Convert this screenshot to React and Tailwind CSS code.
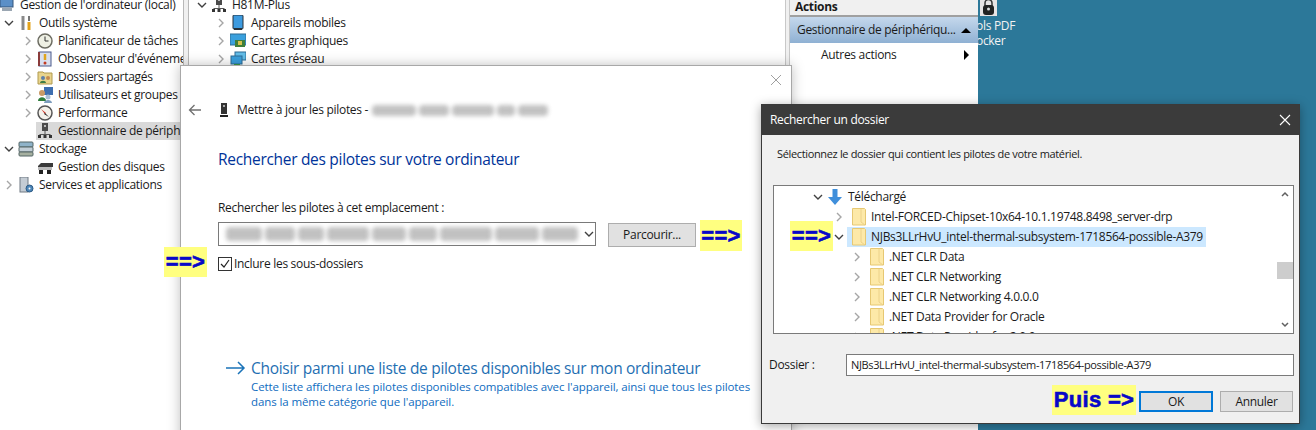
const UI = '[font-family:"Open_Sans","Noto_Sans",sans-serif]';

const Chevron = ({ open, className = '' }) => (
  <svg width="10" height="10" viewBox="0 0 10 10" fill="none" className={`shrink-0 ${className}`}>
    <path d={open ? 'M1 3l4 4 4-4' : 'M3 1l4 4-4 4'} stroke={open ? '#404040' : '#a6a6a6'} strokeWidth="1.4" />
  </svg>
);

const Folder = () => (
  <svg width="14" height="18" viewBox="0 0 14 18" className="shrink-0">
    <path d="M0.5 0.5h12l1 1v15.500h-13z" fill="#fde9a8" stroke="#e6c873" />
    <path d="M9 1v13l4 3" fill="none" stroke="#ecd28a" />
  </svg>
);

const icons = {
  computer: (
    <>
      <rect x="1" y="1" width="13" height="9" fill="#5b8fc7" stroke="#35557a" />
      <rect x="3" y="11" width="10" height="3" fill="#9aa6b2" />
    </>
  ),
  tools: (
    <>
      <path d="M5 1v14" stroke="#8a8a8a" strokeWidth="3" />
      <path d="M11 1v5" stroke="#777" strokeWidth="2" />
      <path d="M11 7v8" stroke="#e3a21a" strokeWidth="3" />
    </>
  ),
  clock: (
    <>
      <circle cx="8" cy="8" r="7" fill="#eef0e4" stroke="#6d6d63" strokeWidth="1.500" />
      <path d="M8 3.500V8h3.500" stroke="#333" fill="none" />
    </>
  ),
  log: (
    <>
      <rect x="2" y="1" width="12" height="14" fill="#d9dfee" stroke="#4b5a8c" />
      <path d="M2 1v14" stroke="#8a3b3b" strokeWidth="2" />
      <path d="M8 3v6" stroke="#e0a51e" strokeWidth="2.500" />
      <circle cx="8" cy="12" r="1.500" fill="#c23b22" />
    </>
  ),
  share: (
    <>
      <path d="M1 3h5l1 1h8v11H1z" fill="#e8d48d" stroke="#b09a4e" />
      <circle cx="6" cy="9" r="2" fill="#5d7fa8" />
      <path d="M3 14c0-3 6-3 6 0z" fill="#3f7d45" />
      <circle cx="11" cy="9" r="2" fill="#c48a4e" />
    </>
  ),
  users: (
    <>
      <rect x="7" y="0" width="9" height="8" fill="#3e6fb0" />
      <circle cx="5" cy="6" r="3" fill="#c99a66" />
      <path d="M1 14c0-5 8-5 8 0z" fill="#2f7d3c" />
      <circle cx="11" cy="10" r="2.500" fill="#a9bfd6" />
      <path d="M7 16c0-4 8-4 8 0z" fill="#7e9dbd" />
    </>
  ),
  perf: (
    <>
      <circle cx="8" cy="8" r="7" fill="#f4f1ea" stroke="#555" strokeWidth="1.500" />
      <path d="M4 4l5 4-1 1z" fill="#c92a1d" />
      <path d="M12 12L8 8l-1 1z" fill="#222" />
    </>
  ),
  device: (
    <>
      <rect x="5" y="0" width="6" height="8" fill="#4b4b4b" />
      <rect x="7" y="2" width="2" height="2" fill="#bbb" />
      <path d="M8 8v3M2.500 11.500h11" stroke="#555" />
      <rect x="1" y="12" width="3" height="3" fill="#333" />
      <rect x="6.500" y="12" width="3" height="3" fill="#333" />
      <rect x="12" y="12" width="3" height="3" fill="#333" />
    </>
  ),
  storage: (
    <>
      <rect x="1" y="1" width="14" height="5" rx="1" fill="#8fb3c9" stroke="#566" />
      <rect x="1" y="6" width="14" height="5" rx="1" fill="#c2ced6" stroke="#566" />
      <rect x="1" y="11" width="14" height="4" rx="1" fill="#a6b0a0" stroke="#566" />
    </>
  ),
  disk: (
    <>
      <path d="M1 7l3-3h12v4H1z" fill="#3a3a3a" />
      <rect x="1" y="8" width="14" height="3" fill="#bbb" />
      <rect x="2" y="11" width="4" height="4" fill="#222" />
      <rect x="10" y="11" width="4" height="4" fill="#222" />
    </>
  ),
  services: (
    <>
      <rect x="2" y="0" width="8" height="15" fill="#c4ccd4" stroke="#707a84" />
      <circle cx="11.500" cy="11.500" r="3.500" fill="#4d86b8" stroke="#2c5a85" />
      <circle cx="11.500" cy="11.500" r="1" fill="#fff" />
    </>
  ),
  mobile: (
    <>
      <rect x="3" y="0" width="10" height="14" rx="1" fill="#3d9be0" stroke="#27313a" />
      <rect x="4" y="13" width="8" height="2" fill="#27313a" />
    </>
  ),
  gpu: (
    <>
      <rect x="0" y="1" width="16" height="11" fill="#3aa0dd" stroke="#2c6c96" />
      <rect x="5" y="7" width="10" height="7" fill="#3f7f3a" />
      <rect x="8" y="8" width="4" height="4" fill="#d5c24e" />
    </>
  ),
  net: (
    <>
      <rect x="5" y="1" width="11" height="8" fill="#63bde8" stroke="#2c6c96" />
      <rect x="1" y="5" width="11" height="8" fill="#3aa0dd" stroke="#2c6c96" />
      <path d="M4 14h6" stroke="#3f9a4a" strokeWidth="2" />
    </>
  ),
};

const Icon = ({ name }) => (
  <svg width="16" height="16" viewBox="0 0 16 16" className="shrink-0">
    {icons[name]}
  </svg>
);

const leftRows = [
  { label: "Gestion de l'ordinateur (local)", icon: 'computer', pad: '-ml-[2px]', arrow: 'none' },
  { label: 'Outils système', icon: 'tools', pad: 'pl-[4px]', arrow: 'open' },
  { label: 'Planificateur de tâches', icon: 'clock', pad: 'pl-[23px]', arrow: 'closed' },
  { label: "Observateur d'événements", icon: 'log', pad: 'pl-[23px]', arrow: 'closed' },
  { label: 'Dossiers partagés', icon: 'share', pad: 'pl-[23px]', arrow: 'closed' },
  { label: 'Utilisateurs et groupes locaux', icon: 'users', pad: 'pl-[23px]', arrow: 'closed' },
  { label: 'Performance', icon: 'perf', pad: 'pl-[23px]', arrow: 'closed' },
  { label: 'Gestionnaire de périphériques', icon: 'device', pad: 'pl-[23px]', arrow: 'blank', active: true },
  { label: 'Stockage', icon: 'storage', pad: 'pl-[4px]', arrow: 'open' },
  { label: 'Gestion des disques', icon: 'disk', pad: 'pl-[23px]', arrow: 'blank' },
  { label: 'Services et applications', icon: 'services', pad: 'pl-[4px]', arrow: 'closed' },
];

const centerRows = [
  { label: 'H81M-Plus', icon: 'device', pad: 'pl-[8px]', arrow: 'open' },
  { label: 'Appareils mobiles', icon: 'mobile', pad: 'pl-[27px]', arrow: 'closed' },
  { label: 'Cartes graphiques', icon: 'gpu', pad: 'pl-[27px]', arrow: 'closed' },
  { label: 'Cartes réseau', icon: 'net', pad: 'pl-[27px]', arrow: 'closed' },
];

function TreeRow({ row }) {
  return (
    <div className={`flex h-[18px] items-center whitespace-nowrap ${row.pad}`}>
      {row.arrow !== 'none' && (
        <span className="flex w-[13px] shrink-0 justify-start">
          {row.arrow === 'open' && <Chevron open />}
          {row.arrow === 'closed' && <Chevron />}
        </span>
      )}
      <span className={`flex h-[18px] items-center gap-[5px] pl-[1px] pr-[6px] ${row.active ? 'bg-[#d9d9d9]' : ''}`}>
        <Icon name={row.icon} />
        <span>{row.label}</span>
      </span>
    </div>
  );
}

const folderRows = [
  { label: 'Intel-FORCED-Chipset-10x64-10.1.19748.8498_server-drp', pad: 'pl-[60px]' },
  { label: 'NJBs3LLrHvU_intel-thermal-subsystem-1718564-possible-A379', pad: 'pl-[60px]', selected: true, open: true },
  { label: '.NET CLR Data', pad: 'pl-[78px]' },
  { label: '.NET CLR Networking', pad: 'pl-[78px]' },
  { label: '.NET CLR Networking 4.0.0.0', pad: 'pl-[78px]' },
  { label: '.NET Data Provider for Oracle', pad: 'pl-[78px]' },
  { label: '.NET Data Provider for 2.0.0', pad: 'pl-[78px]' },
];

function FolderRow({ row }) {
  return (
    <div className={`flex h-[20px] shrink-0 items-center whitespace-nowrap ${row.pad}`}>
      <span className="w-[13px] shrink-0">
        <Chevron open={row.open} />
      </span>
      <span className={`flex h-[20px] items-center gap-[5px] pl-[5px] pr-[3px] ${row.selected ? 'bg-[#cce8ff]' : ''}`}>
        <Folder />
        <span>{row.label}</span>
      </span>
    </div>
  );
}

const Mark = ({ className, children }) => (
  <div className={`absolute flex items-center justify-center whitespace-nowrap bg-[#ffff80] font-['Liberation_Sans',sans-serif] text-[22px] font-bold leading-none tracking-[0.3px] text-[#0808c8] [-webkit-text-stroke:0.6px_#0808c8] ${className}`}>
    {children}
  </div>
);

// redacted text: word-sized smudges, blurred together
const Smudge = ({ words, className }) => (
  <div className={`flex items-center gap-[3px] blur-[2px] ${className}`}>
    {words.map((w, i) => (
      <span key={i} className="h-full rounded-sm bg-[#a8a8a8]" style={{ width: w }} />
    ))}
  </div>
);

export default function App() {
  return (
    <div className={`relative h-[430px] w-[1316px] overflow-hidden bg-[#2c7899] text-[12px] tracking-[-0.3px] text-[#1a1a1a] ${UI}`}>
      {/* desktop shortcut behind the console */}
      <div className="absolute left-[976px] top-[18px] leading-[15px] text-[#f2f2f2]">
        <div>ols PDF</div>
        <div>ocker</div>
      </div>
      <svg width="17" height="16" viewBox="0 0 17 16" className="absolute left-[980px] top-0">
        <rect x="0" y="0" width="17" height="16" fill="#e8e4e4" />
        <path d="M5 6V3a3.500 3.500 0 017 0v3" fill="none" stroke="#333" strokeWidth="1.500" />
        <rect x="3" y="5" width="11" height="10" rx="3" fill="#222" />
        <circle cx="8.500" cy="9" r="1.500" fill="#ddd" />
      </svg>

      {/* console window */}
      <div className="absolute left-0 top-0 flex h-[430px] w-[978px] bg-white">
        <div className="-mt-[4px] w-[183px] shrink-0 overflow-hidden">
          {leftRows.map((row) => (
            <TreeRow key={row.label} row={row} />
          ))}
        </div>
        <div className="w-[6px] shrink-0 border-x border-[#b8b8b8] bg-[#f0f0f0]" />
        <div className="-mt-[4px] w-[596px] shrink-0 overflow-hidden">
          {centerRows.map((row) => (
            <TreeRow key={row.label} row={row} />
          ))}
        </div>
        <div className="w-[5px] shrink-0 border-x border-[#c8c8c8] bg-[#f0f0f0]" />
        <div className="flex-1 whitespace-nowrap">
          <div className="h-[17px] border-b-2 border-[#a0a0a0] bg-[#f0f0f0] pl-[5px] text-[12px] font-bold leading-[13px]">Actions</div>
          <div className="flex h-[26px] items-center justify-between bg-gradient-to-b from-[#c5d8ec] to-[#8fb1d3] pl-[7px] pr-[7px]">
            <span>Gestionnaire de périphériqu...</span>
            <span className="h-0 w-0 border-x-[5px] border-b-[5px] border-x-transparent border-b-black" />
          </div>
          <div className="flex h-[24px] items-center justify-between pl-[31px] pr-[9px]">
            <span>Autres actions</span>
            <span className="h-0 w-0 border-y-[5px] border-l-[5px] border-y-transparent border-l-black" />
          </div>
        </div>
      </div>

      {/* update drivers wizard */}
      <div className="absolute left-[180px] top-[65px] h-[380px] w-[612px] border border-[#a8a8a8] bg-white pl-[37px] pt-[35px] shadow-[0_0_12px_rgba(0,0,0,0.25)]">
        <svg width="12" height="12" viewBox="0 0 12 12" className="absolute right-[9px] top-[8px]">
          <path d="M1 1l10 10M11 1L1 11" stroke="#a0a0a0" />
        </svg>
        <div className="-ml-[30px] flex h-[18px] items-center">
          <svg width="14" height="12" viewBox="0 0 14 12" className="shrink-0">
            <path d="M13 6H1.500M6.500 1L1.500 6l5 5" fill="none" stroke="#707070" strokeWidth="1.300" />
          </svg>
          <svg width="10" height="16" viewBox="0 0 10 16" className="ml-[17px] shrink-0">
            <rect x="2" y="1" width="6" height="11" fill="#333" />
            <rect x="4" y="3" width="2" height="2" fill="#aaa" />
            <rect x="1" y="13" width="8" height="2" fill="#222" />
          </svg>
          <span className="ml-[8px] whitespace-nowrap">Mettre à jour les pilotes -</span>
          <Smudge words={[44, 30, 42, 18, 30]} className="ml-[4px] h-[11px] opacity-70" />
        </div>
        <div className="mt-[28px] text-[15.500px] leading-[24px] text-[#003399]">Rechercher des pilotes sur votre ordinateur</div>
        <div className="mt-[29px] leading-[16px]">Rechercher les pilotes à cet emplacement :</div>
        <div className="mt-[6px] flex items-start">
          <div className="flex h-[24px] w-[378px] items-center border border-[#7a7a7a] pl-[7px] pr-[6px]">
            <Smudge words={[36, 30, 26, 42, 34, 28, 52, 44, 36]} className="h-[14px] flex-1 opacity-70" />
            <Chevron open className="ml-[6px]" />
          </div>
          <div className="ml-[12px] mt-[1px] flex h-[24px] w-[88px] items-center justify-center border border-[#adadad] bg-[#e1e1e1]">Parcourir...</div>
        </div>
        <div className="mt-[8px] flex items-center">
          <span className="flex h-[14px] w-[14px] items-center justify-center border border-[#333] bg-white">
            <svg width="12" height="12" viewBox="0 0 12 12">
              <path d="M2 6l3 3 5-7" fill="none" stroke="#222" strokeWidth="1.200" />
            </svg>
          </span>
          <span className="ml-[2px]">Inclure les sous-dossiers</span>
        </div>
        <div className="ml-[8px] mt-[84px] flex items-center">
          <svg width="20" height="14" viewBox="0 0 20 14" className="shrink-0">
            <path d="M0 7h18M12 1l6 6-6 6" fill="none" stroke="#1a73b8" strokeWidth="1.500" />
          </svg>
          <span className="ml-[5px] whitespace-nowrap text-[15.500px] leading-[22px] text-[#1f6fb2]">Choisir parmi une liste de pilotes disponibles sur mon ordinateur</span>
        </div>
        <div className="ml-[33px] w-[510px] text-[11.500px] leading-[15px] tracking-[-0.1px] text-[#0f6cc0]">
          Cette liste affichera les pilotes disponibles compatibles avec l'appareil, ainsi que tous les pilotes dans la même catégorie que l'appareil.
        </div>
      </div>

      {/* browse for folder dialog */}
      <div className="absolute left-[761px] top-[104px] flex h-[320px] w-[539px] flex-col border border-[#3a3a3a] bg-[#f0f0f0] shadow-[0_2px_10px_rgba(0,0,0,0.35)]">
        <div className="flex h-[30px] shrink-0 items-center justify-between bg-[#3b3b3b] pl-[8px] pr-[6px] text-white">
          <span>Rechercher un dossier</span>
          <svg width="12" height="12" viewBox="0 0 12 12" className="mr-[2px]">
            <path d="M1 1l10 10M11 1L1 11" stroke="#fff" strokeWidth="1.100" />
          </svg>
        </div>
        <div className="ml-[15px] mt-[10px] h-[17px] text-[11px] leading-[17px] tracking-[-0.35px]">Sélectionnez le dossier qui contient les pilotes de votre matériel.</div>
        <div className="ml-[11px] mt-[23px] flex h-[149px] w-[521px] shrink-0 border border-[#7a7a7a] bg-white">
          <div className="flex flex-1 flex-col overflow-hidden pt-[1px]">
            <div className="flex h-[20px] shrink-0 items-center whitespace-nowrap pl-[39px]">
              <Chevron open />
              <svg width="16" height="16" viewBox="0 0 16 16" className="ml-[4px] shrink-0">
                <path d="M5.500 0h5v8H15l-7 8-7-8h4.500z" fill="#3f8fdb" />
              </svg>
              <span className="ml-[5px]">Téléchargé</span>
            </div>
            {folderRows.map((row) => (
              <FolderRow key={row.label} row={row} />
            ))}
          </div>
          <div className="flex w-[16px] shrink-0 flex-col items-center py-[5px]">
            <svg width="8" height="6" viewBox="0 0 8 6"><path d="M1 5l3-3 3 3" fill="none" stroke="#606060" strokeWidth="1.500" /></svg>
            <div className="mt-[65px] h-[17px] w-[16px] bg-[#cdcdcd]" />
            <svg width="8" height="6" viewBox="0 0 8 6" className="mt-auto"><path d="M1 1l3 3 3-3" fill="none" stroke="#606060" strokeWidth="1.500" /></svg>
          </div>
        </div>
        <div className="mt-[20px] flex items-center">
          <span className="ml-[7px] w-[77px]">Dossier :</span>
          <div className="flex h-[22px] w-[448px] items-center border border-[#7a7a7a] bg-white pl-[4px] text-[11px] tracking-[-0.35px]">NJBs3LLrHvU_intel-thermal-subsystem-1718564-possible-A379</div>
        </div>
        <div className="mt-[15px] flex justify-end pr-[6px]">
          <div className="flex h-[21px] w-[74px] items-center justify-center border-2 border-[#0078d7] bg-[#e1e1e1]">OK</div>
          <div className="ml-[7px] flex h-[21px] w-[73px] items-center justify-center border border-[#adadad] bg-[#e1e1e1]">Annuler</div>
        </div>
      </div>

      {/* yellow annotations */}
      <Mark className="left-[700px] top-[220px] h-[31px] w-[42px]">==&gt;</Mark>
      <Mark className="left-[164px] top-[247px] h-[30px] w-[43px]">==&gt;</Mark>
      <Mark className="left-[790px] top-[221px] h-[30px] w-[43px]">==&gt;</Mark>
      <Mark className="left-[1052px] top-[385px] h-[30px] w-[84px]">Puis =&gt;</Mark>
    </div>
  );
}
